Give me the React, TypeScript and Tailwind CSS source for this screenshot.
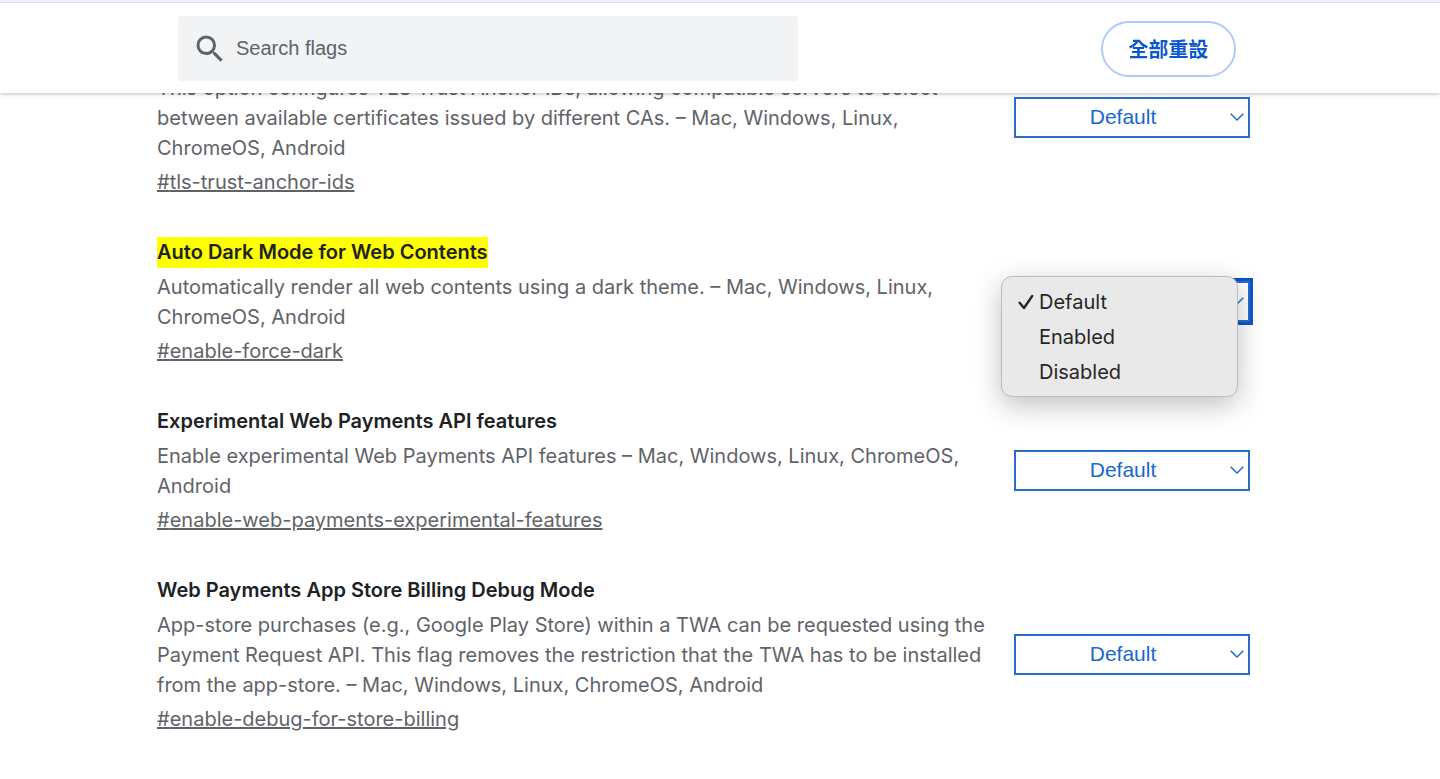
import React, { useState } from 'react';

type Flag = {
  id: string;
  title: string;
  description: string;
};

const options = ['Default', 'Enabled', 'Disabled'];

const flags: Flag[] = [
  {
    id: 'tls-trust-anchor-ids',
    title: '',
    description:
      'This option configures TLS Trust Anchor IDs, allowing compatible servers to select between available certificates issued by different CAs. – Mac, Windows, Linux, ChromeOS, Android',
  },
  {
    id: 'enable-force-dark',
    title: 'Auto Dark Mode for Web Contents',
    description:
      'Automatically render all web contents using a dark theme. – Mac, Windows, Linux, ChromeOS, Android',
  },
  {
    id: 'enable-web-payments-experimental-features',
    title: 'Experimental Web Payments API features',
    description:
      'Enable experimental Web Payments API features – Mac, Windows, Linux, ChromeOS, Android',
  },
  {
    id: 'enable-debug-for-store-billing',
    title: 'Web Payments App Store Billing Debug Mode',
    description:
      'App-store purchases (e.g., Google Play Store) within a TWA can be requested using the Payment Request API. This flag removes the restriction that the TWA has to be installed from the app-store. – Mac, Windows, Linux, ChromeOS, Android',
  },
];

const highlighted = 'enable-force-dark';

const App: React.FC = () => {
  const [values, setValues] = useState<Record<string, string>>({});
  const [search, setSearch] = useState('');
  const [openMenu, setOpenMenu] = useState<string | null>(highlighted);

  const setValue = (id: string, value: string) => {
    setValues({ ...values, [id]: value });
    setOpenMenu(null);
  };

  const resetAll = () => {
    setValues({});
    setOpenMenu(null);
  };

  return (
    <div className="min-h-screen bg-white font-['Inter','Noto_Sans_CJK_TC',sans-serif]">
      <header className="fixed inset-x-0 top-0 z-20 border-t-2 border-[#eff2fb] bg-white shadow-[0_1px_4px_rgba(0,0,0,0.25)]">
        <div className="flex items-center justify-between gap-6 border-t border-[#dcdfea] pt-[13px] pr-[204px] pb-3 pl-[178px]">
          <label className="flex h-[65px] max-w-[620px] flex-1 items-center rounded-[4px] bg-[#f1f3f4] pl-[14px]">
            <svg viewBox="0 0 24 24" className="h-9 w-9 shrink-0 fill-[#5f6368]" aria-hidden="true">
              <path d="M15.5 14h-.79l-.28-.27A6.471 6.471 0 0 0 16 9.5 6.5 6.5 0 1 0 9.5 16c1.61 0 3.09-.59 4.23-1.57l.27.28v.79l5 4.99L20.49 19l-4.99-5zm-6 0C7.01 14 5 11.99 5 9.5S7.01 5 9.5 5 14 7.01 14 9.5 11.99 14 9.5 14z" />
            </svg>
            <input
              type="text"
              aria-label="Search flags"
              placeholder="Search flags"
              value={search}
              onChange={(e) => setSearch(e.target.value)}
              className="ml-2 min-w-0 flex-1 bg-transparent pb-0.5 font-['Liberation_Sans',sans-serif] text-[20px] text-[#202124] outline-none placeholder:text-[#5f6368]"
            />
          </label>
          <button
            onClick={resetAll}
            className="h-14 w-[135px] shrink-0 rounded-full border-2 border-[#b0cbf6] font-['Noto_Sans_CJK_TC',sans-serif] text-[20px] font-bold text-[#0b57d0]"
          >
            全部重設
          </button>
        </div>
      </header>

      <main className="flex flex-col gap-10 pt-[38px] pr-[190px] pb-10 pl-[157px]">
        {flags.map((flag) => (
          <section key={flag.id} className="flex items-center gap-6">
            <div className="flex min-w-0 flex-1 flex-col items-start gap-1 text-[20px] leading-[30px] text-[#5f6368]">
              <h2 className="min-h-[31px] font-semibold leading-[31px] text-[#202124]">
                {flag.id === highlighted ? (
                  <mark className="block bg-[#ffff00] text-[#202124]">{flag.title}</mark>
                ) : (
                  flag.title
                )}
              </h2>
              <p>{flag.description}</p>
              <a href={`#${flag.id}`} className="underline">#{flag.id}</a>
            </div>

            <div className="relative w-[236px] shrink-0">
              <select
                aria-label={flag.title || flag.id}
                value={values[flag.id] || 'Default'}
                onChange={(e) => setValue(flag.id, e.target.value)}
                className={`block h-[41px] w-full appearance-none border-2 border-[#2b6cc6] bg-white pr-[18px] pb-0.5 font-['Liberation_Sans',sans-serif] text-[21px] text-[#1967d2] [text-align-last:center] ${
                  openMenu === flag.id ? 'outline-[3px] outline-[#0b57d0]' : 'outline-none'
                }`}
              >
                {options.map((option) => (
                  <option key={option} value={option}>{option}</option>
                ))}
              </select>
              <svg
                viewBox="0 0 14 8"
                className="pointer-events-none absolute top-4 right-[6px] h-2 w-[14px] fill-none stroke-[#1967d2]"
                aria-hidden="true"
              >
                <path d="M0.7 0.7 7 7 13.3 0.7" strokeWidth="1.4" />
              </svg>

              {openMenu === flag.id && (
                <ul className="absolute -top-[5px] -left-[13px] z-10 w-[237px] rounded-[11px] border border-[#bdbdbd] bg-[#e9e9e9] py-[7px] shadow-[0_8px_28px_rgba(0,0,0,0.25)]">
                  {options.map((option) => (
                    <li key={option}>
                      <button
                        onClick={() => setValue(flag.id, option)}
                        className="flex h-[35px] w-full items-center text-[20px] text-[#262626]"
                      >
                        <span className="flex w-[37px] justify-end pr-[5px]">
                          {option === (values[flag.id] || 'Default') && (
                            <svg viewBox="0 0 16 16" className="h-4 w-4 fill-none stroke-[#262626]" aria-hidden="true">
                              <path d="M1.6 8.8 6 14 14.2 2" strokeWidth="2.4" strokeLinecap="round" strokeLinejoin="round" />
                            </svg>
                          )}
                        </span>
                        {option}
                      </button>
                    </li>
                  ))}
                </ul>
              )}
            </div>
          </section>
        ))}
      </main>
    </div>
  );
};

export default App;
